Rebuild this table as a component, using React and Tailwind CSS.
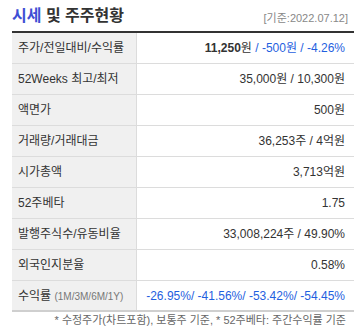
import React from "react";

const F = { fontFamily: '"Liberation Sans", "Noto Sans CJK KR", sans-serif' };

function Row({ label, children, last }) {
  return (
    <div className={`flex h-[31px] ${last ? "border-b-2 border-[#cfcfcf]" : "border-b border-[#dcdcdc]"}`}>
      <div className="w-[125px] shrink-0 bg-[#f0f0f0] border-r border-[#dcdcdc] flex items-center pl-[6px] text-[12px] text-[#333]">
        {label}
      </div>
      <div className="flex-1 flex items-center justify-end pr-[9px] text-[12px] text-[#333]">
        {children}
      </div>
    </div>
  );
}

export default function App() {
  const blue = "text-[#1f5fe0]";
  return (
    <div className="w-[354px] h-[335px] bg-white overflow-hidden" style={F}>
      <div className="flex items-end justify-between pl-[12px] pr-[6px] h-[31px] pb-[7px]">
        <div className="text-[16px] font-bold text-[#333] leading-none">
          <span className="text-[#3f4fd4]">시세</span> 및 주주현황
        </div>
        <div className="text-[11px] text-[#888] leading-none">[기준:2022.07.12]</div>
      </div>
      <div className="ml-[12px] border-t-2 border-[#333]">
        <Row label="주가/전일대비/수익률">
          <span className="font-bold text-[#333]">11,250</span>
          <span>원</span>
          <span className={blue}>&nbsp;/ -500원 / -4.26%</span>
        </Row>
        <Row label="52Weeks 최고/최저">35,000원 / 10,300원</Row>
        <Row label="액면가">500원</Row>
        <Row label="거래량/거래대금">36,253주 / 4억원</Row>
        <Row label="시가총액">3,713억원</Row>
        <Row label="52주베타">1.75</Row>
        <Row label="발행주식수/유동비율">33,008,224주 / 49.90%</Row>
        <Row label="외국인지분율">0.58%</Row>
        <Row
          last
          label={
            <span>
              수익률 <span className="text-[10px] text-[#777]">(1M/3M/6M/1Y)</span>
            </span>
          }
        >
          <span className={blue}>-26.95%/ -41.56%/ -53.42%/ -54.45%</span>
        </Row>
      </div>
      <div className="text-right pr-[8px] pt-[3px] text-[11px] text-[#666] leading-none">
        * 수정주가(차트포함), 보통주 기준, * 52주베타: 주간수익률 기준
      </div>
    </div>
  );
}
